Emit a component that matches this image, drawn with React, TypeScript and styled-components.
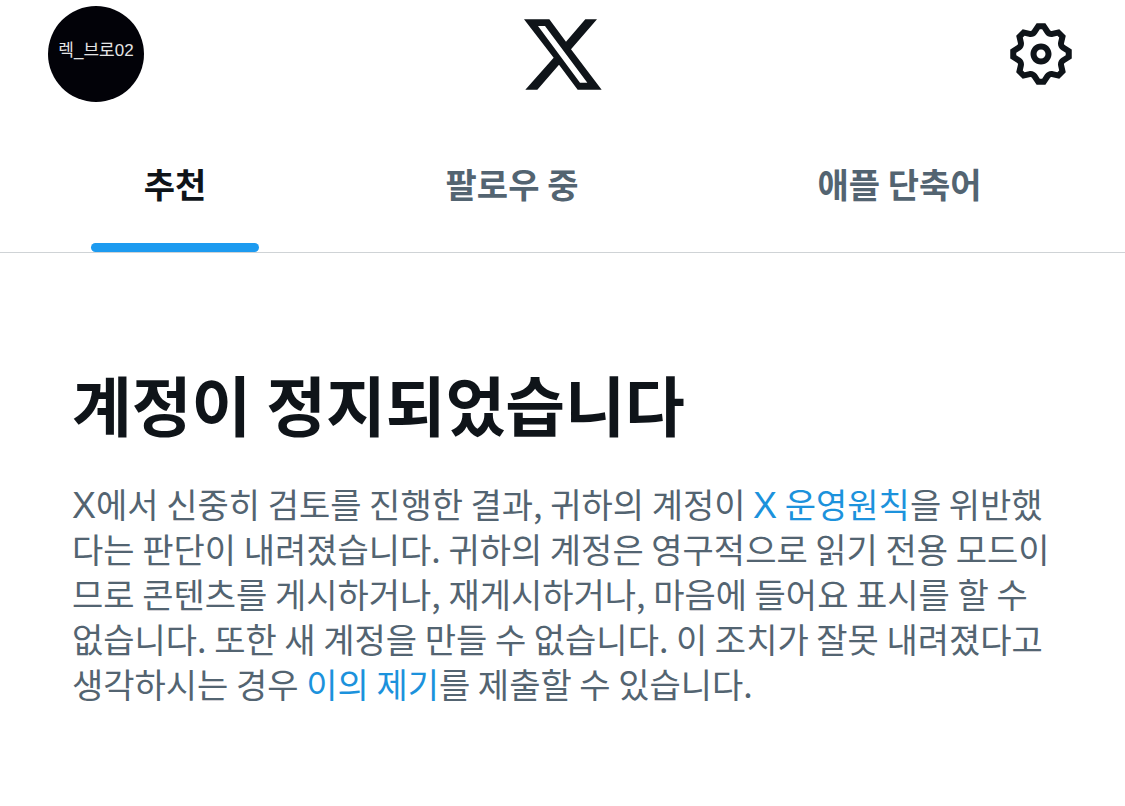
import React from "react";
import styled, { createGlobalStyle } from "styled-components";

const GlobalStyle = createGlobalStyle`
  * { box-sizing: border-box; }
  body {
    margin: 0;
    background: #fff;
    color: #0f1419;
    font-family: "Noto Sans CJK KR", sans-serif;
  }
`;

const Header = styled.header`
  display: grid;
  grid-template-columns: 1fr auto 1fr;
  align-items: center;
  height: 108px;
  padding: 0 48px;
`;

const Avatar = styled.button`
  width: 96px;
  height: 96px;
  padding: 0 0 12px;
  border: 0;
  border-radius: 50%;
  background: #020208;
  color: #e4e4e4;
  font-family: "Liberation Sans", "Noto Sans CJK KR", sans-serif;
  font-size: 17px;
  white-space: nowrap;
`;

const HomeLink = styled.a`
  display: flex;
  color: #0f1419;
`;

const SettingsButton = styled.button`
  display: flex;
  justify-self: end;
  padding: 0;
  border: 0;
  background: none;
  color: #0f1419;
`;

const TabBar = styled.nav`
  display: grid;
  grid-template-columns: 350fr 324fr 451fr;
  height: 145px;
  border-bottom: 1px solid #cfd3d6;
`;

const Tab = styled.button<{ $active?: boolean }>`
  display: flex;
  flex-direction: column;
  align-items: center;
  justify-content: space-between;
  padding: 52px 0 0;
  border: 0;
  background: none;
  color: ${(p) => (p.$active ? "#0f1419" : "#536471")};
  font-family: inherit;
  font-size: 34px;
  font-weight: 700;
  line-height: 48px;
`;

const Indicator = styled.span`
  width: 168px;
  height: 9px;
  border-radius: 5px;
  background: #1d9bf0;
`;

const Notice = styled.main`
  padding: 100px 72px 96px;
`;

const Title = styled.h1`
  margin: 0;
  font-size: 65px;
  font-weight: 700;
  line-height: 100px;
`;

const Message = styled.p`
  margin: 28px 0 0;
  color: #536471;
  font-size: 34px;
  line-height: 45px;
`;

const TextLink = styled.a`
  color: #1c92dc;
  text-decoration: none;
`;

const Latin = styled.span`
  font-family: "Liberation Sans", sans-serif;
  font-size: 36px;
  line-height: 1;
`;

export default function App() {
  return (
    <>
      <GlobalStyle />
      <Header>
        <Avatar>렉_브로02</Avatar>
        <HomeLink href="#" aria-label="X">
          <svg width="95" height="90" viewBox="0 -3 285 270" fill="currentColor" fillRule="evenodd">
            <path d="M27 28H103L153 95L211 28H246L168 118L260 239H188L132 164L67 239H31L116 143ZM69 48L195 218H217L90 48Z" />
          </svg>
        </HomeLink>
        <SettingsButton aria-label="설정">
          <svg width="72" height="72" viewBox="0 0 24 24" fill="currentColor">
            <path d="M10.54 1.75h2.92l1.57 2.36c.11.17.32.25.53.21l2.53-.59 2.17 2.17-.58 2.54c-.05.2.04.41.21.53l2.36 1.57v2.92l-2.36 1.57c-.17.12-.26.33-.21.53l.58 2.54-2.17 2.17-2.53-.59c-.21-.04-.42.04-.53.21l-1.57 2.36h-2.92l-1.58-2.36c-.11-.17-.32-.25-.52-.21l-2.54.59-2.17-2.17.58-2.54c.05-.2-.03-.41-.21-.53l-2.35-1.57v-2.92L4.1 8.97c.18-.12.26-.33.21-.53L3.73 5.9 5.9 3.73l2.54.59c.2.04.41-.04.52-.21l1.58-2.36zm1.07 2l-.98 1.47C10.05 6.08 9 6.5 7.99 6.27l-1.46-.34-.6.6.33 1.46c.24 1.01-.18 2.07-1.05 2.64l-1.46.98v.78l1.46.98c.87.57 1.29 1.63 1.05 2.64l-.33 1.46.6.6 1.46-.34c1.01-.23 2.06.19 2.64 1.05l.98 1.47h.78l.97-1.47c.58-.86 1.63-1.28 2.65-1.05l1.45.34.61-.6-.34-1.46c-.23-1.01.18-2.07 1.05-2.64l1.47-.98v-.78l-1.47-.98c-.87-.57-1.28-1.63-1.05-2.64l.34-1.46-.61-.6-1.45.34c-1.02.23-2.07-.19-2.65-1.05l-.97-1.47h-.78zM12 10.5c-.83 0-1.5.67-1.5 1.5s.67 1.5 1.5 1.5c.83 0 1.5-.67 1.5-1.5s-.67-1.5-1.5-1.5zM8.5 12c0-1.93 1.56-3.5 3.5-3.5 1.93 0 3.5 1.57 3.5 3.5s-1.57 3.5-3.5 3.5c-1.94 0-3.5-1.57-3.5-3.5z" />
          </svg>
        </SettingsButton>
      </Header>
      <TabBar>
        <Tab $active>
          추천
          <Indicator />
        </Tab>
        <Tab>팔로우 중</Tab>
        <Tab>애플 단축어</Tab>
      </TabBar>
      <Notice>
        <Title>계정이 정지되었습니다</Title>
        <Message>
          <Latin>X</Latin>에서 신중히 검토를 진행한 결과, 귀하의 계정이{" "}
          <TextLink href="#rules">
            <Latin>X</Latin> 운영원칙
          </TextLink>
          을 위반했다는 판단이 내려졌습니다. 귀하의 계정은 영구적으로 읽기 전용 모드이므로 콘텐츠를 게시하거나,
          재게시하거나, 마음에 들어요 표시를 할 수 없습니다. 또한 새 계정을 만들 수 없습니다. 이 조치가 잘못 내려졌다고
          생각하시는 경우 <TextLink href="#appeal">이의 제기</TextLink>를 제출할 수 있습니다.
        </Message>
      </Notice>
    </>
  );
}
